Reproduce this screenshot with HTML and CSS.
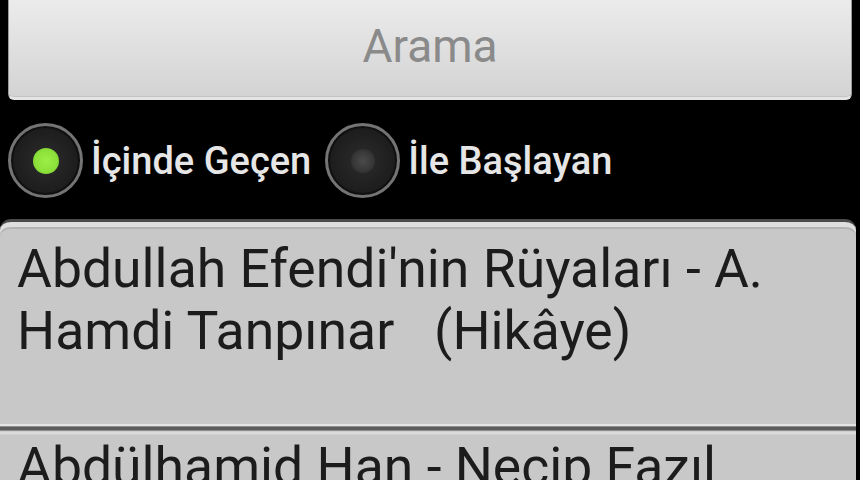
FILE: index.html
```html
<!DOCTYPE html>
<html lang="tr">
<head>
<meta charset="utf-8">
<title>Arama</title>
<link rel="stylesheet" href="styles.css">
</head>
<body>
<div class="screen">
  <div class="search-btn">Arama</div>
  <div class="radio-row">
    <label class="radio">
      <span class="radio-circle checked"><span class="dot"></span></span>
      <span class="radio-text">İçinde Geçen</span>
    </label>
    <label class="radio">
      <span class="radio-circle"><span class="dot"></span></span>
      <span class="radio-text">İle Başlayan</span>
    </label>
  </div>
  <div class="list">
    <div class="item first">Abdullah Efendi'nin Rüyaları - A. Hamdi Tanpınar&nbsp;&nbsp; (Hikâye)</div>
    <div class="divider"></div>
    <div class="item second">Abdülhamid Han - Necip Fazıl</div>
  </div>
</div>
</body>
</html>
```

FILE: styles.css
```css
html, body {
  margin: 0;
  padding: 0;
  background: #000;
  overflow: hidden;
}
.screen {
  width: 860px;
  height: 480px;
  overflow: hidden;
  font-family: Roboto, "Open Sans", sans-serif;
}
.search-btn {
  margin: -12px 8px 0 8px;
  height: 112px;
  box-sizing: border-box;
  padding-top: 12px;
  border-radius: 6px;
  background: linear-gradient(#eeeeee, #d3d3d3);
  border: 1px solid #9a9a9a;
  border-bottom: 3px solid #e4e4e4;
  box-shadow: inset 0 -1px 0 #c4c4c4;
  color: #8a8a8a;
  font-size: 46px;
  line-height: 90px;
  text-align: center;
}
.radio-row {
  display: flex;
  align-items: center;
  height: 77px;
  margin-top: 22px;
  padding-left: 8px;
}
.radio {
  display: flex;
  align-items: center;
}
.radio-circle {
  width: 75px;
  height: 75px;
  box-sizing: border-box;
  border-radius: 50%;
  border: 3px solid #747474;
  background: radial-gradient(circle, #2c2c2c 0%, #1c1c1c 70%, #121212 100%);
  box-shadow: inset 0 0 0 2px #101010;
  display: flex;
  align-items: center;
  justify-content: center;
}
.radio-circle .dot {
  width: 24px;
  height: 24px;
  border-radius: 50%;
  background: radial-gradient(circle, #4a4a4a 0%, #3a3a3a 50%, #262626 100%);
}
.radio-circle.checked .dot {
  width: 26px;
  height: 26px;
  background: radial-gradient(circle, #9cef45 0%, #8be03a 60%, #6cb82a 100%);
}
.radio-text {
  color: #e6e6e6;
  font-size: 38px;
  font-weight: 500;
  margin-left: 8px;
  margin-right: 14px;
}
.list {
  margin-top: 20px;
  background: #c8c8c8;
  border-radius: 11px 11px 0 0;
  border-top: 3px solid #4a4a4a;
  box-shadow: inset 0 5px 0 #dedede, inset 0 7px 0 #b4b4b4;
  margin-right: 4px;
}
.item {
  color: #1c1c1c;
  font-size: 53.5px;
  line-height: 62px;
  padding: 0 20px 0 17px;
}
.item.first {
  padding-top: 16px;
  height: 185px;
}
.divider {
  height: 13px;
  background: linear-gradient(#c8c8c8 0, #c8c8c8 1px, #e4e4e4 1px, #e4e4e4 3px, #c0c0c0 3px, #5c5c5c 4px, #5c5c5c 7px, #c0c0c0 8px, #dadada 9px, #dadada 11px, #c8c8c8 12px);
}
.item.second {
  padding-top: 0;
  white-space: nowrap;
}
```
